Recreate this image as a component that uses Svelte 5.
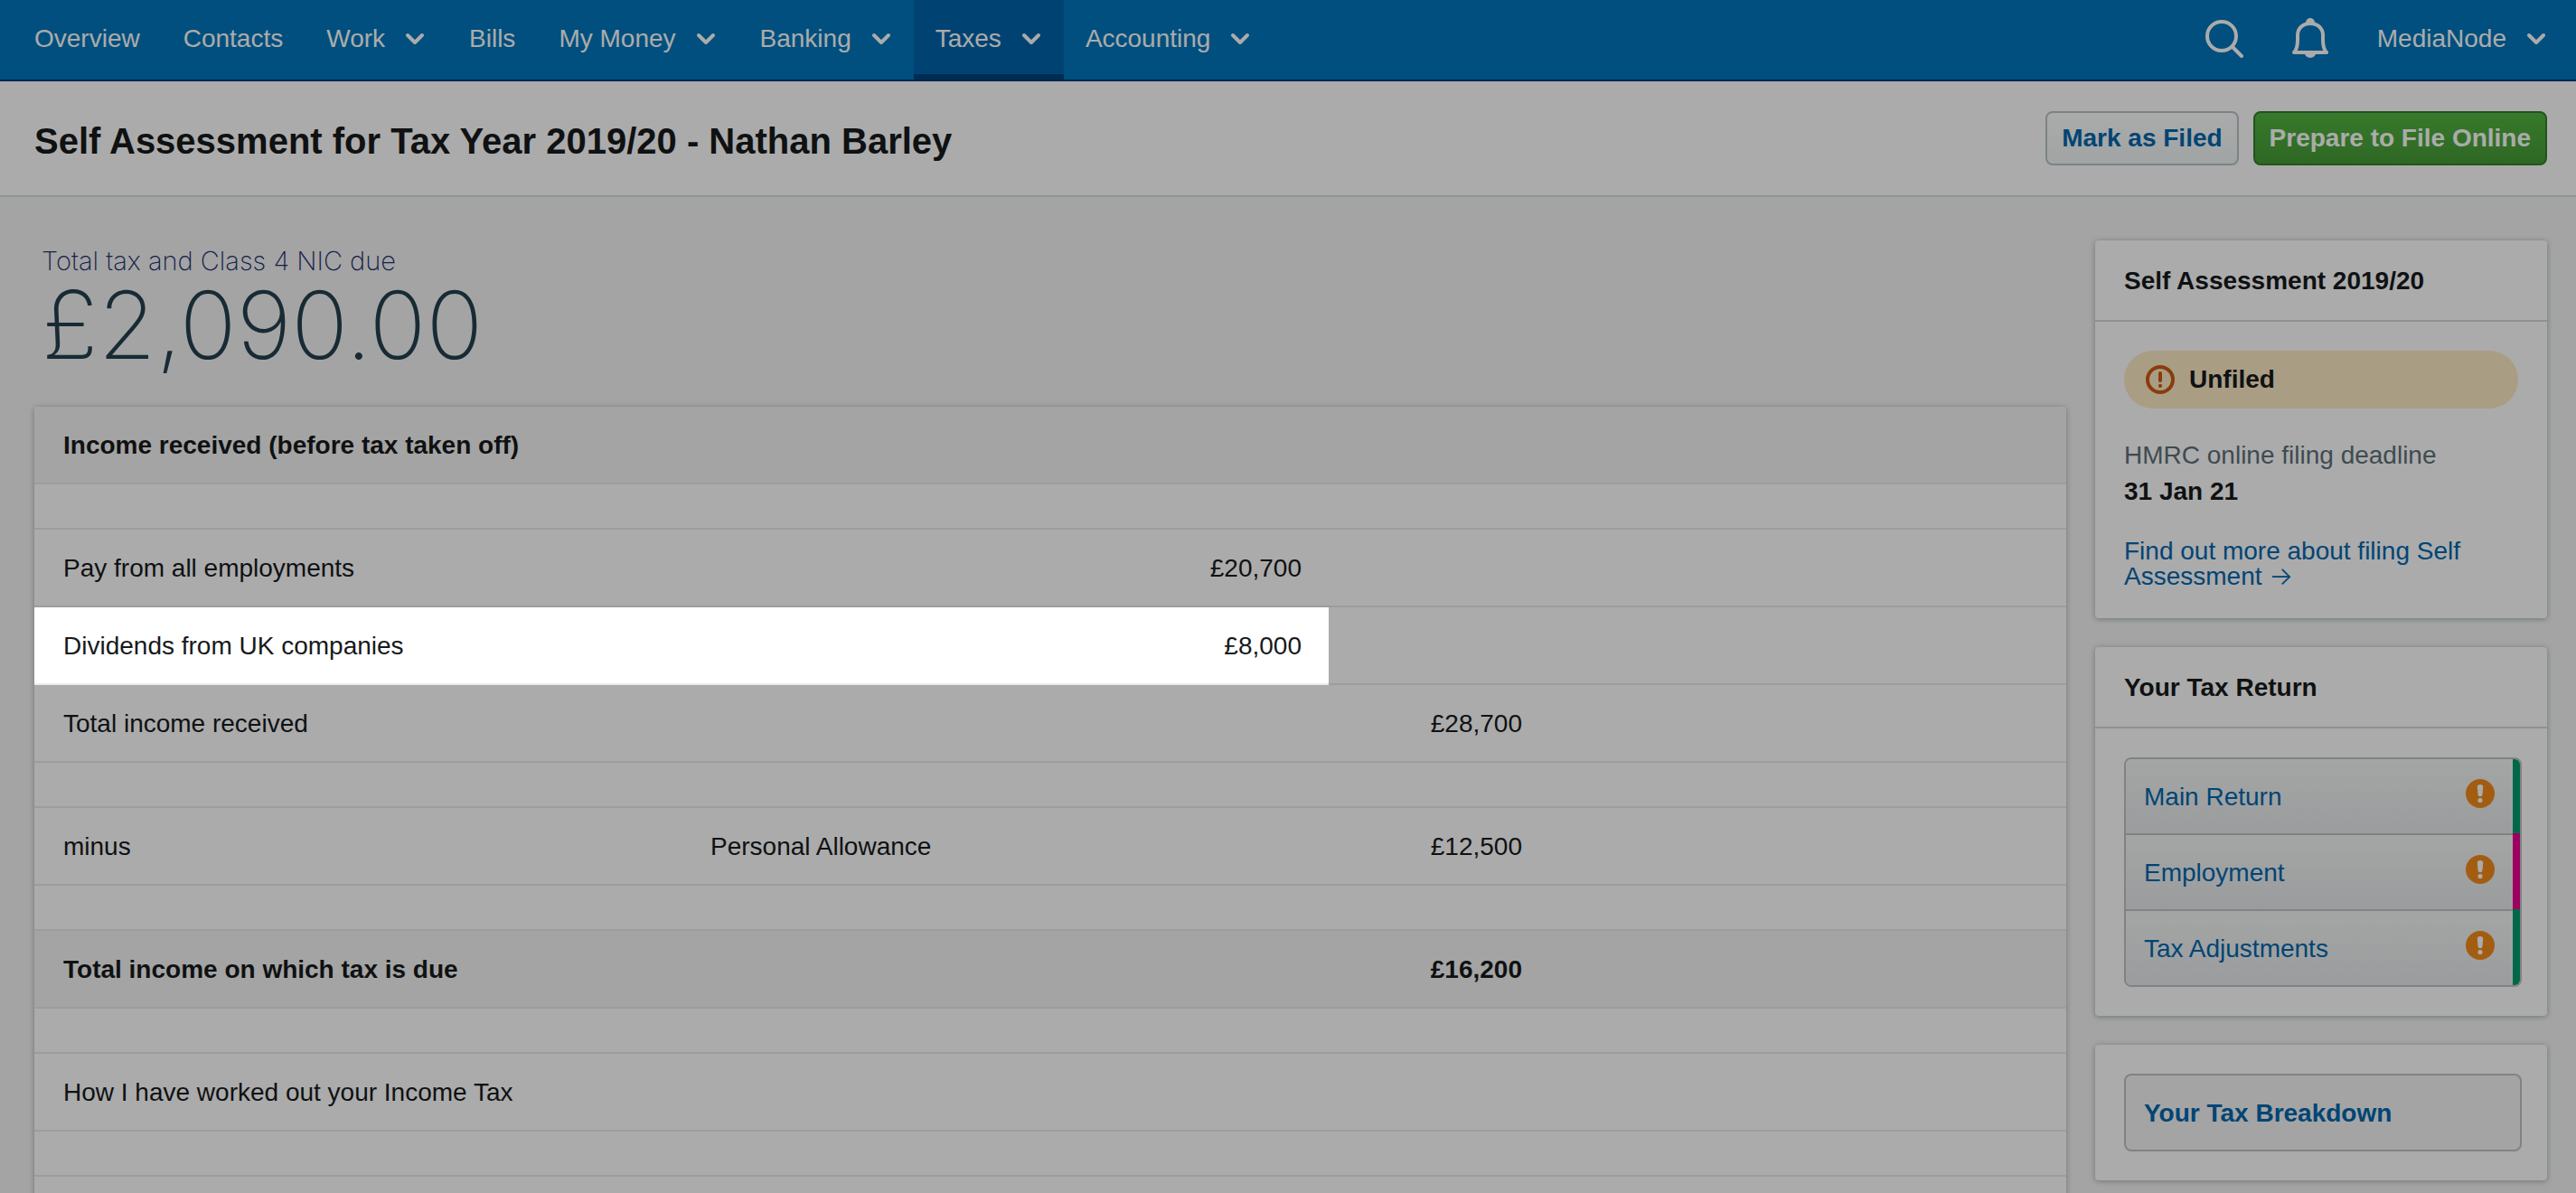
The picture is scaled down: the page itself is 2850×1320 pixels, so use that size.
<script>
  const navItems = [
    { label: "Overview" },
    { label: "Contacts" },
    { label: "Work", menu: true },
    { label: "Bills" },
    { label: "My Money", menu: true },
    { label: "Banking", menu: true },
    { label: "Taxes", menu: true },
    { label: "Accounting", menu: true },
  ];

  const rows = [
    { kind: "heading", label: "Income received (before tax taken off)" },
    { kind: "spacer" },
    { label: "Pay from all employments", amount: "£20,700" },
    {
      label: "Dividends from UK companies",
      amount: "£8,000",
      id: "dividends",
    },
    { label: "Total income received", total: "£28,700" },
    { kind: "spacer" },
    { label: "minus", note: "Personal Allowance", total: "£12,500" },
    { kind: "spacer" },
    {
      kind: "heading",
      label: "Total income on which tax is due",
      total: "£16,200",
    },
    { kind: "spacer" },
    { label: "How I have worked out your Income Tax" },
    { kind: "spacer" },
    { kind: "spacer" },
  ];

  const returnPages = [
    { label: "Main Return", colour: "green" },
    { label: "Employment", colour: "pink" },
    { label: "Tax Adjustments", colour: "green" },
  ];

  let activeNav = "Taxes";
  let highlighted = "dividends";
</script>

{#snippet chevron()}
  <svg class="chevron" viewBox="0 0 24 24" aria-hidden="true">
    <path d="M4 8 L12 16 L20 8" />
  </svg>
{/snippet}

<div class="page">
  <nav class="topbar">
    <div class="nav-items">
      {#each navItems as item}
        {#if item.menu}
          <button class="nav-item" class:active={item.label === activeNav}>
            {item.label}
            {@render chevron()}
          </button>
        {:else}
          <a class="nav-item" href="#{item.label.toLowerCase()}">{item.label}</a>
        {/if}
      {/each}
    </div>
    <div class="nav-tools">
      <button class="tool" aria-label="Search">
        <svg viewBox="0 0 44 44" aria-hidden="true">
          <circle cx="18" cy="20" r="16" />
          <path d="M30 32 L40 42" />
        </svg>
      </button>
      <button class="tool" aria-label="Notifications">
        <svg viewBox="0 0 44 44" aria-hidden="true">
          <path
            d="M2 38 C5 35 6 31 6 24 V19 C6 11 12 6 20 6 C28 6 34 11 34 19 V24 C34 31 35 35 38 38 Z"
          />
          <path class="solid" d="M15 5 a5 5 0 0 1 10 0 Z M14 39 a6 5 0 0 0 12 0 Z" />
        </svg>
      </button>
      <button class="nav-item">
        MediaNode
        {@render chevron()}
      </button>
    </div>
  </nav>

  <header class="title-bar">
    <h1>Self Assessment for Tax Year 2019/20 - Nathan Barley</h1>
    <div class="actions">
      <button class="btn">Mark as Filed</button>
      <button class="btn primary">Prepare to File Online</button>
    </div>
  </header>

  <div class="content">
    <main>
      <div class="summary">
        <div class="summary-label">Total tax and Class 4 NIC due</div>
        <div class="summary-amount">£2,090.00</div>
      </div>

      <div class="card">
        <table>
          <colgroup>
            <col class="col-label" />
            <col class="col-note" />
            <col class="col-amount" />
            <col class="col-total" />
            <col />
          </colgroup>
          <tbody>
            {#each rows as row}
              <tr class={row.kind} class:spotlit={row.id === highlighted}>
                {#if row.kind === "spacer"}
                  <td colspan="5"></td>
                {:else}
                  <td>{row.label}</td>
                  <td>{row.note ?? ""}</td>
                  <td class="number">{row.amount ?? ""}</td>
                  <td class="number">{row.total ?? ""}</td>
                  <td></td>
                {/if}
              </tr>
            {/each}
          </tbody>
        </table>
      </div>
    </main>

    <aside>
      <section class="card">
        <h2>Self Assessment 2019/20</h2>
        <div class="card-body">
          <div class="status">
            <svg viewBox="0 0 32 32" aria-hidden="true">
              <circle cx="16" cy="16" r="14" />
              <path d="M16 9 V17" />
              <path d="M16 22.8 V23" />
            </svg>
            Unfiled
          </div>
          <div class="deadline">
            <div class="muted">HMRC online filing deadline</div>
            <strong>31 Jan 21</strong>
          </div>
          <a href="#filing">
            Find out more about filing Self Assessment <span class="arrow">→</span>
          </a>
        </div>
      </section>

      <section class="card">
        <h2>Your Tax Return</h2>
        <div class="card-body wide">
          <ul class="pages">
            {#each returnPages as page}
              <li class={page.colour}>
                <a href="#return">
                  {page.label}
                  <svg viewBox="0 0 32 32" aria-hidden="true">
                    <circle cx="16" cy="16" r="16" />
                    <path d="M12.8 8.5 a3.2 2.5 0 0 1 6.4 0 L18.5 17 a2.5 2.3 0 0 1 -5 0 Z" />
                    <circle class="dot" cx="16" cy="23.5" r="2.6" />
                  </svg>
                </a>
              </li>
            {/each}
          </ul>
        </div>
      </section>

      <section class="card">
        <div class="card-body wide">
          <a class="breakdown" href="#breakdown">Your Tax Breakdown</a>
        </div>
      </section>
    </aside>
  </div>

  <div class="dimmer"></div>
</div>

<style>
  :global(body) {
    margin: 0;
  }
  .page {
    height: 100vh;
    overflow: hidden;
    background: #f5f5f5;
    color: #171a1c;
    font-family: "Liberation Sans", Arial, sans-serif;
    font-size: 28px;
    line-height: 28px;
  }
  .page * {
    box-sizing: border-box;
  }
  a {
    color: #0067ae;
    text-decoration: none;
  }
  button {
    font: inherit;
    cursor: pointer;
  }

  /* top navigation */
  .topbar {
    display: flex;
    justify-content: space-between;
    padding: 0 8px 0 14px;
    background: #0077bc;
    border-bottom: 2px solid #003a75;
  }
  .nav-items,
  .nav-tools {
    display: flex;
  }
  .nav-item {
    display: flex;
    align-items: center;
    gap: 21px;
    height: 88px;
    padding: 4px 24px 0;
    border: 0;
    border-bottom: 6px solid transparent;
    background: none;
    color: #fff;
  }
  .nav-item.active {
    background: #0065ac;
    border-bottom-color: #00427d;
  }
  .chevron {
    width: 24px;
    height: 24px;
    fill: none;
    stroke: #fff;
    stroke-width: 4;
    stroke-linecap: round;
    stroke-linejoin: round;
  }
  .tool {
    display: flex;
    align-items: center;
    padding: 0 26px 4px;
    border: 0;
    background: none;
  }
  .tool svg {
    width: 44px;
    height: 44px;
    fill: none;
    stroke: #fff;
    stroke-width: 4;
    stroke-linecap: round;
    stroke-linejoin: round;
  }
  .tool .solid {
    fill: #fff;
    stroke: none;
  }

  /* title and actions */
  .title-bar {
    display: flex;
    align-items: center;
    justify-content: space-between;
    height: 128px;
    padding: 0 32px 0 38px;
    background: #fff;
    border-bottom: 2px solid #d1dddd;
  }
  h1 {
    margin: 0;
    padding-top: 6px;
    font-size: 40px;
    line-height: 48px;
  }
  .actions {
    display: flex;
    gap: 16px;
  }
  .btn {
    height: 60px;
    padding: 0 16px;
    border: 2px solid #b9c4c8;
    border-radius: 8px;
    background: linear-gradient(#fff, #f0f5f5);
    color: #0067ae;
    font-weight: bold;
  }
  .btn.primary {
    border-color: #377d2e;
    background: linear-gradient(#51b63f, #459b36);
    color: #fff;
  }

  /* page body */
  .content {
    display: flex;
    gap: 32px;
    padding: 48px 32px 0 38px;
  }
  main {
    flex: 1;
    min-width: 0;
  }
  .summary {
    height: 184px;
    padding-left: 8px;
    font-family: Inter, sans-serif;
    font-weight: 200;
  }
  .summary-label {
    color: #1e306e;
    font-size: 29px;
    line-height: 46px;
  }
  .summary-amount {
    color: #24404f;
    font-size: 104px;
    line-height: 94px;
  }
  .card {
    background: #fff;
    border-radius: 4px;
    box-shadow: 0 1px 6px rgba(40, 70, 70, 0.4);
  }

  table {
    width: 100%;
    table-layout: fixed;
    border-collapse: separate;
    border-spacing: 0;
  }
  .col-label {
    width: 716px;
  }
  .col-note {
    width: 440px;
  }
  .col-amount {
    width: 276px;
  }
  .col-total {
    width: 244px;
  }
  td {
    height: 86px;
    padding: 2px 30px 0 32px;
    border-bottom: 2px solid #e8ecec;
    white-space: nowrap;
  }
  .number {
    text-align: right;
  }
  .spacer td {
    height: 50px;
  }
  .heading td {
    background: #f5f5f5;
    font-weight: bold;
  }

  /* sidebar */
  aside {
    display: flex;
    flex-direction: column;
    gap: 32px;
    width: 500px;
  }
  h2 {
    margin: 0;
    padding: 31px 32px 29px;
    border-bottom: 2px solid #d1d9de;
    font-size: 28px;
    line-height: 28px;
  }
  .card-body {
    display: flex;
    flex-direction: column;
    gap: 32px;
    padding: 32px;
  }
  .card-body.wide {
    padding-right: 28px;
  }
  .status {
    display: flex;
    align-items: center;
    gap: 16px;
    height: 64px;
    padding: 0 24px;
    border-radius: 32px;
    background: #fceac5;
    font-weight: bold;
  }
  .status svg {
    width: 32px;
    height: 32px;
    fill: none;
    stroke: #cc5a12;
    stroke-width: 4;
    stroke-linecap: round;
  }
  .deadline {
    line-height: 40px;
  }
  .muted {
    color: #5e707a;
  }
  .arrow {
    font-family: Inter, sans-serif;
    font-weight: 300;
    line-height: 20px;
  }
  .pages {
    margin: 0;
    padding: 0;
    overflow: hidden;
    list-style: none;
    border: 2px solid #c2c2c2;
    border-radius: 8px;
  }
  .pages li {
    border-right: 8px solid #009b6e;
  }
  .pages li.pink {
    border-right-color: #e9008f;
  }
  .pages li + li a {
    border-top: 2px solid #c2c2c2;
  }
  .pages a {
    display: flex;
    justify-content: space-between;
    padding: 22px 20px 20px;
    background: linear-gradient(#f5f8f7, #e7e9eb);
    line-height: 40px;
  }
  .pages svg {
    width: 32px;
    height: 32px;
    fill: #f38b19;
  }
  .pages path,
  .pages .dot {
    fill: #fff;
  }
  .breakdown {
    padding: 22px 20px 20px;
    border: 2px solid #c2c2c2;
    border-radius: 8px;
    background: #f5f5f5;
    font-weight: bold;
    line-height: 40px;
  }

  /* dim everything except the spotlit cells */
  .dimmer {
    position: fixed;
    inset: 0;
    z-index: 1;
    background: rgba(0, 0, 0, 0.33);
    pointer-events: none;
  }
  .spotlit td:nth-child(-n + 3) {
    position: relative;
    z-index: 2;
    background: #fff;
  }
</style>
